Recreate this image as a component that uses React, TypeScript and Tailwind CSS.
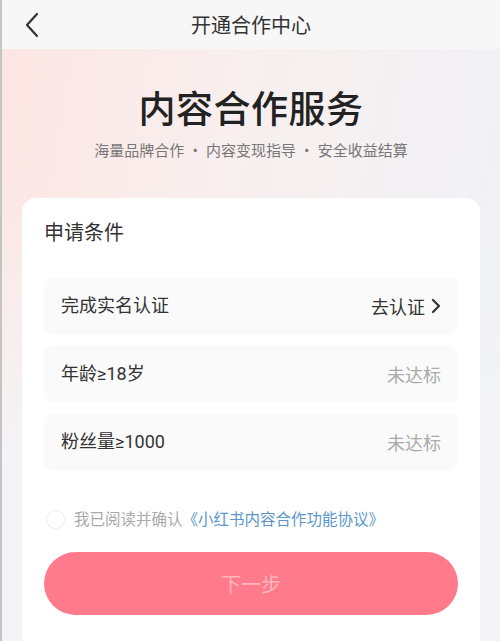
import React from "react";

const latin = { fontFamily: 'Roboto, "Noto Sans CJK SC", sans-serif' };

function Row({ label, right }: { label: string; right: React.ReactNode }) {
  return (
    <div className="h-[58px] rounded-[10px] bg-[#fafafa] flex items-center justify-between pl-[17px] pr-[17px]">
      <span className="text-[18px] text-[#333] leading-none" style={latin}>{label}</span>
      {right}
    </div>
  );
}

export default function App() {
  return (
    <div
      className="w-[500px] h-[641px] overflow-hidden border-l-2 border-[#c4c4c4] flex flex-col"
      style={{ fontFamily: '"Noto Sans CJK SC", "Noto Sans", sans-serif' }}
    >
      <div className="h-[49px] shrink-0 bg-[#f7f7f7] grid grid-cols-[1fr_auto_1fr] items-center">
        <div className="pl-[22px] flex items-center">
          <svg width="16" height="26" viewBox="0 0 16 26" fill="none">
            <path d="M13 2L3 13l10 11" stroke="#333" strokeWidth="2.2" strokeLinecap="round" strokeLinejoin="round" />
          </svg>
        </div>
        <div className="text-[20px] text-[#333] leading-none">开通合作中心</div>
        <div />
      </div>
      <div className="flex-1 flex flex-col bg-[linear-gradient(to_bottom,rgba(243,244,247,0)_0%,rgba(243,244,247,0)_25%,#f4f4f6_70%),linear-gradient(100deg,#fce6e3_0%,#f8efee_40%,#eff2f8_100%)]">
        <div className="h-[149px] shrink-0 flex flex-col items-center">
          <div className="mt-[35px] text-[37px] font-medium text-[#222] leading-[46px] tracking-[0.5px]">内容合作服务</div>
          <div className="mt-[10px] text-[15px] text-[#777] leading-[20px]">
            海量品牌合作 · 内容变现指导 · 安全收益结算
          </div>
        </div>
        <div className="mx-[20px] flex-1 bg-white rounded-t-[14px] px-[22px] pt-[20px] flex flex-col">
          <div className="text-[20px] text-[#333] leading-[28px]">申请条件</div>
          <div className="mt-[31px] flex flex-col gap-[10px]">
            <Row
              label="完成实名认证"
              right={
                <span className="flex items-center gap-[6px] text-[18px] text-[#333] leading-none">
                  去认证
                  <svg width="10" height="16" viewBox="0 0 10 16" fill="none">
                    <path d="M2 2l6 6-6 6" stroke="#333" strokeWidth="2.2" strokeLinecap="round" strokeLinejoin="round" />
                  </svg>
                </span>
              }
            />
            <Row label="年龄≥18岁" right={<span className="text-[18px] text-[#aaa] leading-none">未达标</span>} />
            <Row label="粉丝量≥1000" right={<span className="text-[18px] text-[#aaa] leading-none">未达标</span>} />
          </div>
          <div className="mt-[38px] h-[20px] flex items-center pl-[2px]">
            <div className="w-[19px] h-[19px] rounded-full border border-[#ececec] bg-white" />
            <span className="ml-[9px] text-[15.5px] text-[#aaa] leading-none">我已阅读并确认</span>
            <span className="text-[15.5px] text-[#5b97c9] leading-none">《小红书内容合作功能协议》</span>
          </div>
          <div className="mt-[23px] h-[63px] rounded-full bg-[#ff7b8b] flex items-center justify-center">
            <span className="text-[20px] text-[#ffb6bf] leading-none">下一步</span>
          </div>
        </div>
      </div>
    </div>
  );
}
